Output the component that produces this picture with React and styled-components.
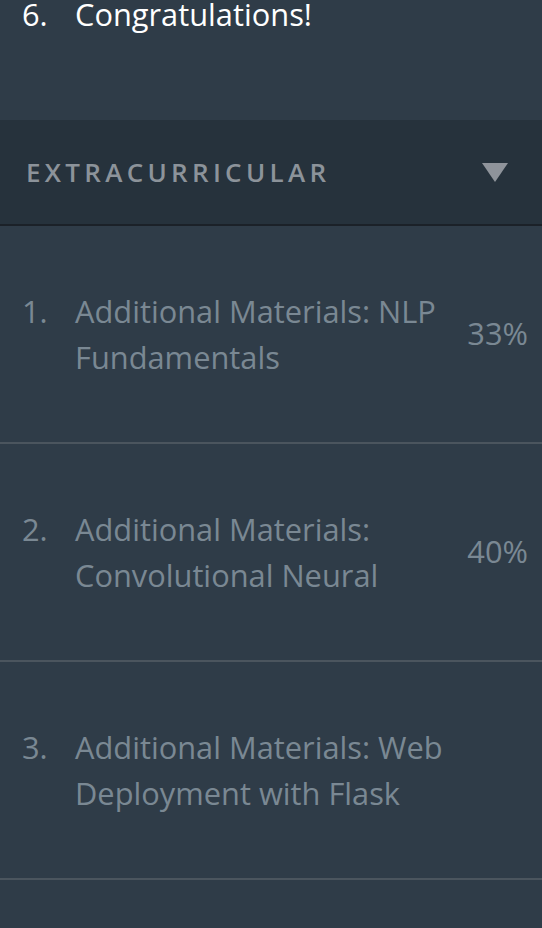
import styled, { createGlobalStyle } from "styled-components";

const lessons = [
  { title: "Additional Materials: NLP Fundamentals", progress: "33%" },
  { title: "Additional Materials: Convolutional Neural", progress: "40%" },
  { title: "Additional Materials: Web Deployment with Flask" },
];

export default function App() {
  return (
    <>
      <GlobalStyle />
      <Sidebar>
        <LessonList>
          <LessonRow $active $tail>
            <LessonLabel>
              <LessonNumber>6.</LessonNumber>
              <LessonTitle>Congratulations!</LessonTitle>
            </LessonLabel>
          </LessonRow>
        </LessonList>

        <SectionHeader>
          <SectionTitle>Extracurricular</SectionTitle>
          <Caret viewBox="0 0 28 20" aria-hidden="true">
            <path d="M1 1 H27 L14 20 Z" fill="currentColor" />
          </Caret>
        </SectionHeader>

        <LessonList>
          {lessons.map((lesson, index) => (
            <LessonRow key={index}>
              <LessonLabel>
                <LessonNumber>{index + 1}.</LessonNumber>
                <LessonTitle>{lesson.title}</LessonTitle>
              </LessonLabel>
              {lesson.progress && <Progress>{lesson.progress}</Progress>}
            </LessonRow>
          ))}
        </LessonList>
      </Sidebar>
    </>
  );
}

const GlobalStyle = createGlobalStyle`
  html, body {
    margin: 0;
    padding: 0;
    background: #2f3c48;
    overflow: hidden;
  }
  body {
    font-family: "Open Sans", "Noto Sans", sans-serif;
  }
`;

const Sidebar = styled.nav`
  width: 542px;
  height: 928px;
  overflow: hidden;
  background: #2f3c48;
`;

const LessonList = styled.ol`
  list-style: none;
  margin: 0;
  padding: 0;
`;

const LessonRow = styled.li`
  display: flex;
  align-items: center;
  justify-content: space-between;
  gap: 16px;
  min-height: 218px;
  box-sizing: border-box;
  padding: 0 14px 0 22px;
  border-bottom: 2px solid #4b555e;
  font-size: 30.8px;
  line-height: 46px;
  color: ${({ $active }) => ($active ? "#ffffff" : "#7a8893")};
  ${({ $tail }) =>
    $tail &&
    `
    min-height: 0;
    height: 129px;
    margin-top: -9px;
    align-items: flex-start;
    border-bottom: none;
  `}
`;

const LessonLabel = styled.div`
  display: flex;
  align-items: flex-start;
  max-width: 440px;
`;

const LessonNumber = styled.span`
  flex: 0 0 53px;
`;

const LessonTitle = styled.span``;

const Progress = styled.span`
  flex-shrink: 0;
  margin-top: -2px;
`;

const SectionHeader = styled.div`
  display: flex;
  align-items: center;
  justify-content: space-between;
  height: 106px;
  box-sizing: border-box;
  padding: 0 33px 0 26px;
  background: #26323c;
  border-bottom: 2px solid #1b2128;
`;

const SectionTitle = styled.h2`
  margin: 0;
  font-size: 26px;
  font-weight: 600;
  letter-spacing: 4.3px;
  text-transform: uppercase;
  color: #8c939a;
`;

const Caret = styled.svg`
  width: 28px;
  height: 20px;
  color: #8f949b;
`;
